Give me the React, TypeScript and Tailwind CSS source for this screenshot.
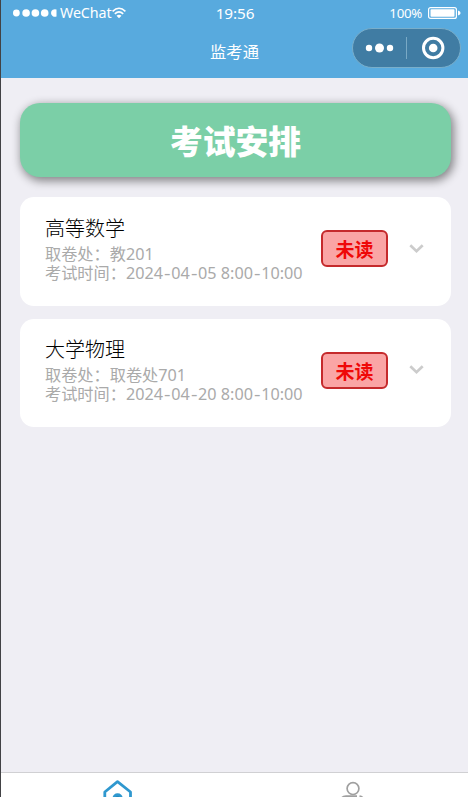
import React from "react";

type Exam = {
  name: string;
  place: string;
  date: string;
  card: string;
  text: string;
  arrow: string;
};

const exams: Exam[] = [
  { name: "高等数学", place: "教201", date: "2024-04-05 8:00-10:00", card: "mt-[20px] h-[109px]", text: "pt-[19px]", arrow: "mt-[46px]" },
  { name: "大学物理", place: "取卷处701", date: "2024-04-20 8:00-10:00", card: "mt-[13px] h-[108px]", text: "pt-[18px]", arrow: "mt-[45px]" },
];

function StatusBar() {
  return (
    <div className="flex h-[26px] items-center pl-[12px] pr-[7px] text-white">
      <div className="flex w-[200px] items-center">
        <svg width="44" height="10" viewBox="0 0 44 10" fill="currentColor">
          <circle cx="3.4" cy="5" r="3.4" />
          <circle cx="13.1" cy="5" r="3.8" />
          <circle cx="22.4" cy="5" r="3.8" />
          <circle cx="31.7" cy="5" r="3.8" />
          <path d="M43.5 1.6a3.8 3.8 0 1 0 0 6.8Z" />
        </svg>
        <span className="ml-[3px] w-[52px] whitespace-nowrap pb-[1px] text-[14.3px] leading-[20px] tracking-[-0.1px]">WeChat</span>
        <svg width="14" height="12" viewBox="0 0 14 12" fill="none" stroke="currentColor" strokeWidth="1.6">
          <path d="M0.6 4.3Q7-1.8 13.4 4.3M2.8 6.8Q7 2.9 11.2 6.8" />
          <path d="M4.5 8.8Q7 6.8 9.5 8.8L7 11.3Z" fill="currentColor" stroke="none" />
        </svg>
      </div>
      <span className="w-[44px] whitespace-nowrap pb-[1px] text-center text-[15.3px] leading-[20px] tracking-[-0.1px]">19:56</span>
      <div className="ml-auto flex items-center pb-[1px]">
        <span className="whitespace-nowrap text-[13.3px] leading-[20px] tracking-[-0.3px]">100%</span>
        <svg className="ml-[6px]" width="33" height="12" viewBox="0 0 33 12">
          <rect x="0.6" y="0.6" width="27.8" height="10.8" rx="2" fill="none" stroke="white" strokeWidth="1.2" />
          <rect x="2.5" y="2.3" width="24" height="7.4" rx="0.8" fill="white" />
          <path d="M30 3.5q2.6 0.6 2.6 2.5T30 8.5Z" fill="white" />
        </svg>
      </div>
    </div>
  );
}

function Capsule() {
  return (
    <div className="flex h-[40px] w-[109px] items-center rounded-full border border-[#79aeca] bg-[#407ca3]">
      <svg width="107" height="38" viewBox="0 0 107 38" fill="white">
        <circle cx="16" cy="19" r="3.2" />
        <circle cx="26.5" cy="19" r="4.5" />
        <circle cx="37" cy="19" r="3.2" />
        <path d="M53.5 8v22" stroke="#79a9c5" strokeWidth="1" />
        <circle cx="80.2" cy="19" r="9.7" fill="none" stroke="white" strokeWidth="3" />
        <circle cx="80.2" cy="19" r="4.3" />
      </svg>
    </div>
  );
}

function ExamCard({ name, place, date, card, text, arrow }: Exam) {
  return (
    <section className={`${card} flex rounded-[14px] bg-white pl-[25px] pr-[27px]`}>
      <div className={`w-[276px] ${text}`}>
        <h2 className="text-[20px] font-light leading-[26px] text-black">{name}</h2>
        <div className="mt-[3px] whitespace-nowrap text-[16.2px] leading-[19px] text-[#aaaaaa]">
          <p>取卷处：{place}</p>
          <p>
            考试时间：
            {date.split("-").map((part, i) => (
              <React.Fragment key={i}>
                {i > 0 && <span className="inline-block w-[8.3px] scale-x-125 text-center">-</span>}
                {part}
              </React.Fragment>
            ))}
          </p>
        </div>
      </div>
      <div className="mt-[33px] flex h-[37px] w-[67px] items-center justify-center rounded-[6px] border-2 border-[#c52a2c] bg-[#faa5a5] pt-[2px] text-[19px] font-bold leading-[26px] text-[#ef0808]">
        未读
      </div>
      <svg className={`ml-auto ${arrow}`} width="15" height="11" viewBox="0 0 15 11" fill="none" stroke="#cccccc" strokeWidth="2.7">
        <path d="M1.3 2.2l6.2 6 6.2-6" />
      </svg>
    </section>
  );
}

export default function App() {
  return (
    <div className="flex h-[797px] w-full flex-col overflow-hidden border-l border-[#424245] bg-[#efeef4] font-['Noto_Sans','Noto_Sans_CJK_SC',sans-serif]">
      <header className="h-[78px] shrink-0 bg-[#58aade]">
        <StatusBar />
        <div className="flex h-[44px] items-center text-white">
          <div className="w-[116px]" />
          <h1 className="flex-1 pt-[8px] text-center text-[16.3px] leading-[24px]">监考通</h1>
          <div className="w-[116px]">
            <Capsule />
          </div>
        </div>
      </header>
      <main className="flex-1 pl-[19px] pr-[17px] pt-[25px]">
        <div className="flex h-[74px] items-center justify-center rounded-[20px] bg-[#7bcfa7] pt-[3px] text-[32.8px] font-black leading-[48px] text-white shadow-[2px_3px_10px_1px_rgba(0,0,0,0.45)]">
          考试安排
        </div>
        {exams.map((exam) => (
          <ExamCard key={exam.name} {...exam} />
        ))}
      </main>
      <nav className="grid h-[25px] shrink-0 grid-cols-2 overflow-hidden border-t border-[#d0d0d3] bg-white">
        <div className="flex justify-center">
          <svg className="mt-[6px] shrink-0" width="30" height="30" viewBox="0 0 30 30" fill="none" stroke="#2f98cf" strokeWidth="2.8" strokeLinejoin="round">
            <path d="M14.5 2.7L27.5 13V28H1.8V13Z" />
            <circle cx="14.6" cy="19.3" r="3.7" fill="#2388bd" />
          </svg>
        </div>
        <div className="flex justify-center pl-[3px]">
          <svg className="mt-[7px] shrink-0" width="26" height="28" viewBox="0 0 26 28" fill="none" stroke="#a0a0a0" strokeWidth="1.7">
            <circle cx="13" cy="8.6" r="5.9" />
            <path d="M1 26v-5q0-4.8 5-4.8h11M19.5 16.2q4 0.5 5 5v5" />
          </svg>
        </div>
      </nav>
    </div>
  );
}
